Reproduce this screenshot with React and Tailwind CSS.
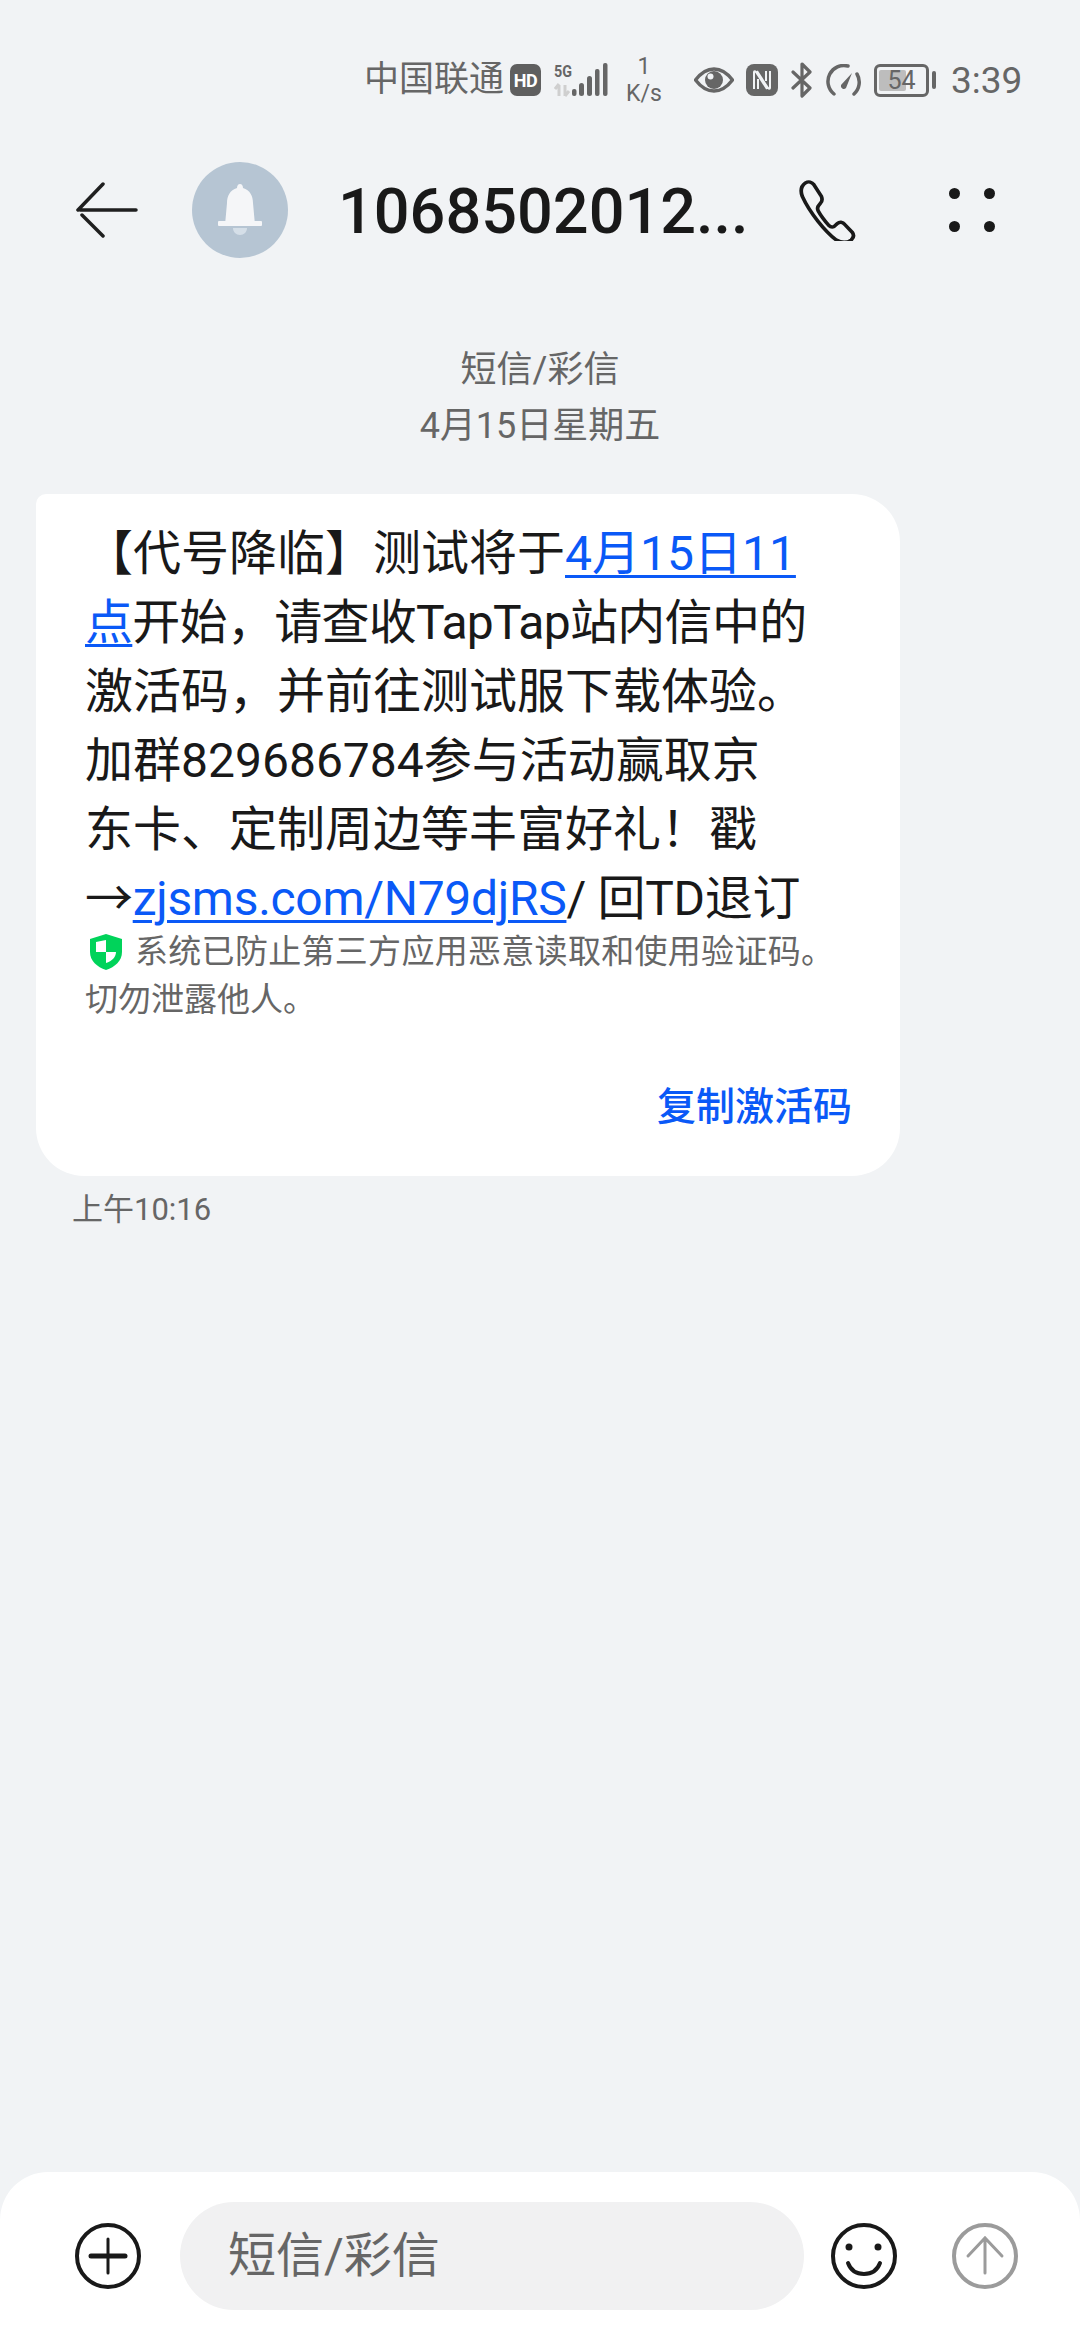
const font = { fontFamily: '"Roboto", "Noto Sans CJK SC", sans-serif' };

const StatusBar = () => (
  <div className="flex items-center h-[80px] mt-[40px] pl-[364px] text-[#666666]">
    <span className="text-[35px] leading-[50px] w-[141px] whitespace-nowrap">中国联通</span>
    <span className="ml-[5px] w-[31px] h-[32px] rounded-[7px] bg-[#5f5f5f] text-white text-[18px] font-bold flex items-center justify-center tracking-[-0.5px]">HD</span>
    <svg className="ml-[13px]" width="54" height="34" viewBox="0 0 54 34">
      <text x="0" y="14" fontSize="17" fontWeight="700" fill="#666" textLength="18" lengthAdjust="spacingAndGlyphs">5G</text>
      <path d="M5 33V22M1 26l4-5M11 33V22M11 33l4-5" stroke="#cfcfcf" strokeWidth="3" fill="none" />
      <rect x="18" y="26" width="4.5" height="7" fill="#666" rx="2" />
      <rect x="25" y="20" width="5" height="13" fill="#666" rx="2.5" />
      <rect x="33" y="13" width="5" height="20" fill="#666" rx="2.5" />
      <rect x="41" y="6" width="4.5" height="27" fill="#666" rx="2" />
      <rect x="49" y="0" width="4.5" height="33" fill="#666" rx="2" />
    </svg>
    <div className="ml-[18px] w-[36px] flex flex-col items-center text-[23px] leading-[27px] mt-[-1px]">
      <span>1</span>
      <span>K/s</span>
    </div>
    <svg className="ml-[32px]" width="40" height="26" viewBox="0 0 40 26">
      <path d="M1.5 13C8 4.500 14 2 20 2s12 2.500 18.500 11C32 21.500 26 24 20 24S8 21.500 1.500 13z" fill="none" stroke="#666" strokeWidth="3.500" />
      <circle cx="20" cy="13" r="9" fill="#666" />
      <circle cx="16.500" cy="9.500" r="3" fill="#f1f3f5" />
    </svg>
    <svg className="ml-[12px]" width="32" height="32" viewBox="0 0 32 32">
      <rect width="32" height="32" rx="8" fill="#666" />
      <path d="M8 25V8c0-1 1-1 2 0l11 17M12 25V15M24 7v17c0 1-1 1-2 0L11 7M20 7v10" fill="none" stroke="#f1f3f5" strokeWidth="2" />
    </svg>
    <svg className="ml-[13px]" width="22" height="36" viewBox="0 0 22 36">
      <path d="M2 10l17 16-8 8V2l8 8L2 26" fill="none" stroke="#666" strokeWidth="3.200" strokeLinecap="round" strokeLinejoin="round" />
    </svg>
    <svg className="ml-[13px]" width="36" height="33" viewBox="0 0 36 33">
      <path d="M8 30A16 16 0 0 1 22 2M31 10a16 16 0 0 1-3 20" fill="none" stroke="#666" strokeWidth="3.500" strokeLinecap="round" />
      <path d="M15 21l11-12-6 15a3 3 0 0 1-5-3z" fill="#666" />
    </svg>
    <div className="ml-[12px] relative w-[55px] h-[33px] rounded-[6px] border-[3px] border-[#666666]">
      <div className="absolute left-[2px] top-[3px] bottom-[3px] w-[27px] rounded-[2px] bg-[#bdbdbd]" />
      <span className="absolute inset-0 flex items-center justify-center text-[25px] leading-none">54</span>
    </div>
    <div className="ml-[3px] w-[4px] h-[18px] rounded-[2px] bg-[#666666]" />
    <span className="ml-[15px] text-[37px] leading-none whitespace-nowrap">3:39</span>
  </div>
);

const Header = () => (
  <div className="flex items-center h-[120px] mt-[30px]">
    <svg className="ml-[76px]" width="62" height="56" viewBox="0 0 62 56">
      <path d="M60 28H4M27 2L2 28M6 33l21 21" fill="none" stroke="#1f1f1f" strokeWidth="3.500" strokeLinecap="round" />
    </svg>
    <div className="ml-[54px] w-[96px] h-[96px] rounded-full bg-[#b6c5d3] flex items-center justify-center">
      <svg width="48" height="52" viewBox="0 0 48 52">
        <path d="M24 0c2 0 3 2 3 4 7 2 10 8 10 15l2 22H9l2-22c0-7 3-13 10-15 0-2 1-4 3-4z" fill="#f5f6f8" />
        <rect x="2" y="37" width="44" height="5" rx="1" fill="#f5f6f8" />
        <path d="M17 44h14c0 4-3 7-7 7s-7-3-7-7z" fill="#d5dfe8" />
      </svg>
    </div>
    <span className="ml-[50px] mt-[2px] w-[410px] text-[63px] font-medium leading-none text-[#191919] whitespace-nowrap">1068502012...</span>
    <svg className="ml-[49px]" width="68" height="62" viewBox="0 0 64 64" preserveAspectRatio="none">
      <path d="M8 4c3-2 6-1 8 2l7 12c1 3 1 5-1 7l-2 3c-1 2-1 3 0 5 3 6 6 10 10 15 1 1 3 2 5 1l3-3c2-2 5-2 7 1l7 8c2 3 1 6-1 8-4 3-9 3-14 0C27 55 12 35 5 18 3 12 4 7 8 4z" fill="none" stroke="#191919" strokeWidth="3.500" />
    </svg>
    <div className="ml-[84px] grid grid-cols-2 gap-x-[24px] gap-y-[22px]">
      <span className="w-[11px] h-[11px] rounded-full bg-[#191919]" />
      <span className="w-[11px] h-[11px] rounded-full bg-[#191919]" />
      <span className="w-[11px] h-[11px] rounded-full bg-[#191919]" />
      <span className="w-[11px] h-[11px] rounded-full bg-[#191919]" />
    </div>
  </div>
);

const Link = ({ children }) => <span className="text-[#0a59f7] underline decoration-[3px] underline-offset-[5px]">{children}</span>;

const Bubble = () => (
  <div className="ml-[36px] w-[864px] h-[682px] mt-[40px] bg-white rounded-[48px] rounded-tl-[10px] pl-[49px] pr-[40px] pt-[25px]">
    <div className="text-[48px] leading-[69px] text-[#191919] whitespace-nowrap">
      <div>【代号降临】测试将于<Link>4月15日11</Link></div>
      <div className="tracking-[-0.7px]"><Link>点</Link>开始，请查收TapTap站内信中的</div>
      <div>激活码，并前往测试服下载体验。</div>
      <div>加群829686784参与活动赢取京</div>
      <div>东卡、定制周边等丰富好礼！戳</div>
      <div className="tracking-[-0.3px]">→<Link>zjsms.com/N79djRS</Link>/ 回TD退订</div>
    </div>
    <div className="mt-[-5px] text-[33px] leading-[48px] text-[#666666] whitespace-nowrap">
      <div className="flex items-center tracking-[0.3px]">
        <svg className="ml-[5px]" width="32" height="36" viewBox="0 0 32 36">
          <path d="M16 0l16 5v13c0 9-7 15-16 18C7 33 0 27 0 18V5z" fill="#00d35a" />
          <path d="M16 6v12H6V8zM16 18h10c0 5-4 9-10 11z" fill="#fff" />
        </svg>
        <span className="ml-[13px]">系统已防止第三方应用恶意读取和使用验证码。</span>
      </div>
      <div>切勿泄露他人。</div>
    </div>
    <div className="mt-[59px] text-right pr-[8px] text-[39px] leading-[48px] font-medium text-[#0a59f7]">复制激活码</div>
  </div>
);

const Composer = () => (
  <div className="absolute left-0 right-0 bottom-0 h-[168px] bg-white rounded-t-[48px] flex items-center">
    <svg className="ml-[75px]" width="66" height="66" viewBox="0 0 66 66">
      <circle cx="33" cy="33" r="31" fill="none" stroke="#191919" strokeWidth="4" />
      <path d="M16 33h34" stroke="#191919" strokeWidth="5" strokeLinecap="round" />
      <path d="M33 16v34" stroke="#191919" strokeWidth="3" strokeLinecap="round" />
    </svg>
    <div className="ml-[39px] w-[624px] h-[108px] rounded-full bg-[#f1f1f2] flex items-center pl-[48px]">
      <span className="text-[48px] leading-none text-[#666666]">短信/彩信</span>
    </div>
    <svg className="ml-[27px]" width="66" height="66" viewBox="0 0 66 66">
      <circle cx="33" cy="33" r="31" fill="none" stroke="#191919" strokeWidth="4" />
      <circle cx="18" cy="24" r="3.500" fill="#191919" />
      <circle cx="47" cy="24" r="3.500" fill="#191919" />
      <path d="M17 40c3 8 9 11 16 11s13-3 16-11" fill="none" stroke="#191919" strokeWidth="4" strokeLinecap="round" />
    </svg>
    <svg className="ml-[55px]" width="66" height="66" viewBox="0 0 66 66">
      <circle cx="33" cy="33" r="31" fill="none" stroke="#9b9b9b" strokeWidth="4" />
      <path d="M33 50V16M16 33l17-18 17 18" fill="none" stroke="#9b9b9b" strokeWidth="3" strokeLinecap="round" />
    </svg>
  </div>
);

export default function App() {
  return (
    <div className="relative w-[1080px] h-[2340px] overflow-hidden bg-[#f1f3f5]" style={font}>
      <StatusBar />
      <Header />
      <div className="mt-[72px] text-center text-[36px] leading-[56px] text-[#666666]">
        <div>短信/彩信</div>
        <div>4月15日星期五</div>
      </div>
      <Bubble />
      <div className="ml-[72px] mt-[10px] text-[31px] leading-[48px] text-[#666666]">上午10:16</div>
      <Composer />
    </div>
  );
}
